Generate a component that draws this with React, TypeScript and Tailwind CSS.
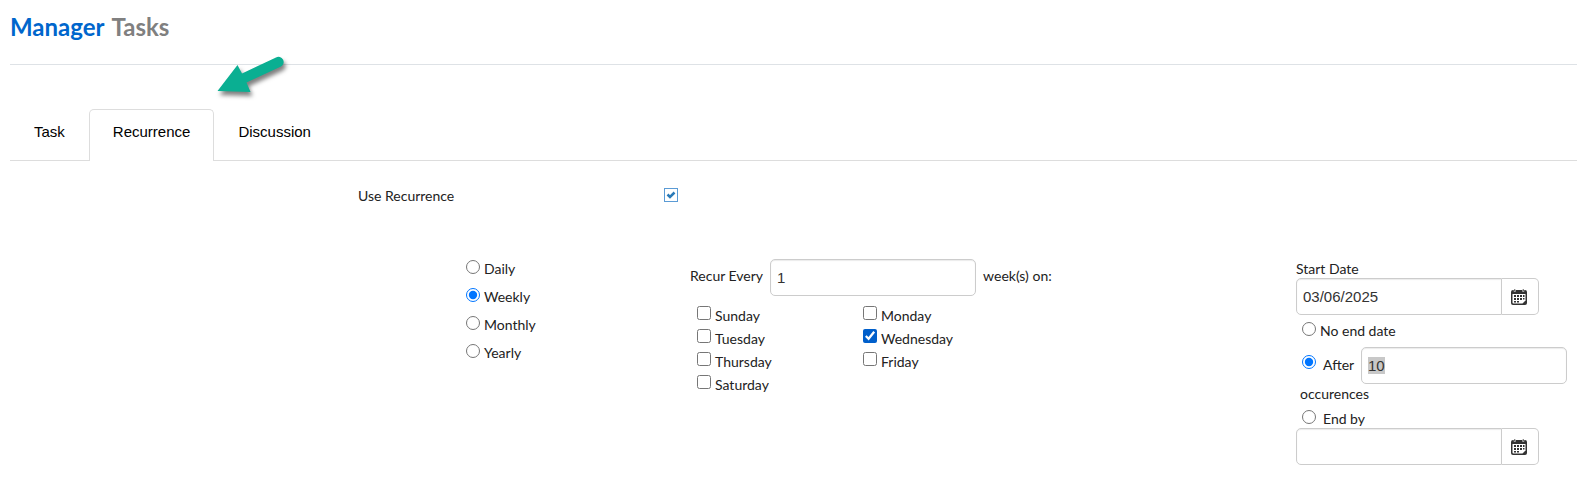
import React, { useEffect, useRef } from 'react';

const tabs = ['Task', 'Recurrence', 'Discussion'];
const periods = ['Daily', 'Weekly', 'Monthly', 'Yearly'];
const days = ['Sunday', 'Monday', 'Tuesday', 'Wednesday', 'Thursday', 'Friday', 'Saturday'];

const fieldClass =
  'h-[37px] w-[206px] border border-[#cccccc] bg-white px-[6px] font-["Liberation_Sans",sans-serif] text-[15px] text-[#333333] shadow-[inset_0_1px_1px_rgba(0,0,0,0.08)] outline-none';

const CalendarIcon: React.FC = () => (
  <svg className="mr-[2px]" width="16" height="16" viewBox="0 0 16 16" fill="none" aria-hidden="true">
    <path d="M2 1h12a2 2 0 0 1 2 2v11a2 2 0 0 1-2 2H2a2 2 0 0 1-2-2V3a2 2 0 0 1 2-2z" fill="#333333" />
    <path d="M1.500 5h13v6.500l-3 3H2.500a1 1 0 0 1-1-1z" fill="#ffffff" />
    <path d="M3 0h1.500v2.500H3zM11.500 0H13v2.500h-1.500z" fill="#333333" stroke="#ffffff" strokeWidth="0.500" />
    <path
      d="M6 6h2v2H6zM9 6h2v2H9zM12 6h1.500v2H12zM3 6h2v2H3zM3 9h2v2H3zM6 9h2v2H6zM9 9h2v2H9zM12 9h1.500v1.500H12zM3 12h2v1.500H3zM6 12h2v1.500H6z"
      fill="#333333"
    />
  </svg>
);

const Arrow: React.FC = () => (
  <svg
    className="pointer-events-none absolute top-[50px] left-[210px]"
    width="84"
    height="56"
    viewBox="210 50 84 56"
    aria-hidden="true"
  >
    <g style={{ filter: 'drop-shadow(2px 4px 2px rgba(0,0,0,0.5))' }}>
      <path
        d="M217.500 91L237.500 65L242 73.500L276 57.500A5 5 0 0 1 281 66.500L246.500 82.500L250.500 92Z"
        fill="#0aaf92"
      />
    </g>
  </svg>
);

const DateField: React.FC<{ id: string; value: string; label: string }> = ({ id, value, label }) => (
  <div className="flex">
    <input id={id} type="text" defaultValue={value} aria-label={label} className={`${fieldClass} rounded-l-[5px]`} />
    <button
      type="button"
      aria-label="Open calendar"
      className="flex h-[37px] w-[37px] items-center justify-center rounded-r-[5px] border border-l-0 border-[#cccccc] bg-white"
    >
      <CalendarIcon />
    </button>
  </div>
);

const App: React.FC = () => {
  const afterRef = useRef<HTMLInputElement>(null);

  useEffect(() => {
    afterRef.current?.select();
  }, []);

  return (
    <main className="relative bg-white pb-4 pl-[10px] font-[Lato,sans-serif] text-[14px] leading-[18px] text-[#222222]">
      <h1 className="flex h-[65px] items-start gap-[7px] border-b border-[#dee2e6] pt-[11px] text-[24px] leading-[32px] font-bold text-[#808080]">
        <span className="text-[#0066cc]">Manager</span>
        <span>Tasks</span>
      </h1>
      <Arrow />

      <div role="tablist" className="mt-11 flex border-b border-[#dddddd] font-['Liberation_Sans',sans-serif] text-[15px] text-black">
        {tabs.map((tab) => (
          <button
            key={tab}
            type="button"
            role="tab"
            aria-selected={tab === 'Recurrence'}
            className={
              tab === 'Recurrence'
                ? '-mb-px h-[52px] rounded-t-[5px] border border-b-0 border-[#dddddd] bg-white px-[23px] pb-2'
                : 'h-[51px] px-6 pb-[6px]'
            }
          >
            {tab}
          </button>
        ))}
      </div>

      <div className="mt-[27px] grid grid-cols-[348fr_306fr_913fr]">
        <label htmlFor="use-recurrence" className="col-start-2 -mt-px">
          Use Recurrence
        </label>
        <div className="relative h-[14px] w-[14px]">
          <input
            id="use-recurrence"
            type="checkbox"
            defaultChecked
            className="peer block h-[14px] w-[14px] appearance-none border border-[#5b9bd5] bg-white"
          />
          <svg
            className="pointer-events-none absolute inset-0 hidden peer-checked:block"
            width="14"
            height="14"
            viewBox="0 0 14 14"
            fill="none"
            stroke="#2a7ab8"
            strokeWidth="2.500"
            aria-hidden="true"
          >
            <path d="M3.500 6.500L6 9L10.500 4.500" />
          </svg>
        </div>
      </div>

      <div className="mt-[55px] grid grid-cols-[456fr_224fr_606fr_281fr]">
        <fieldset className="col-start-2">
          {periods.map((period) => (
            <div key={period} className="flex h-7 items-start gap-1">
              <input
                id={period}
                type="radio"
                name="period"
                defaultChecked={period === 'Weekly'}
                className="h-[14px] w-[14px] accent-[#0075ff]"
              />
              <label htmlFor={period}>{period}</label>
            </div>
          ))}
        </fieldset>

        <div className="-mt-px">
          <div className="flex items-center gap-[7px]">
            <label htmlFor="interval" className="pb-1">
              Recur Every
            </label>
            <input id="interval" type="text" defaultValue="1" className={`${fieldClass} rounded-[5px]`} />
            <span className="pb-1">week(s) on:</span>
          </div>
          <fieldset className="mt-[10px] grid grid-cols-[166px_166px] pl-[7px]">
            {days.map((day) => (
              <div key={day} className="flex h-[23px] items-start gap-1">
                <input
                  id={day}
                  type="checkbox"
                  defaultChecked={day === 'Wednesday'}
                  className="h-[14px] w-[14px] accent-[#005fcb]"
                />
                <label htmlFor={day} className="pt-px">
                  {day}
                </label>
              </div>
            ))}
          </fieldset>
        </div>

        <div>
          <label htmlFor="start-date" className="block">
            Start Date
          </label>
          <DateField id="start-date" value="03/06/2025" label="Start Date" />
          <div className="mt-[7px] flex items-start gap-1 pl-[6px]">
            <input id="no-end" type="radio" name="end" className="h-[14px] w-[14px]" />
            <label htmlFor="no-end">No end date</label>
          </div>
          <div className="mt-[7px] flex items-center pl-[6px]">
            <input id="after" type="radio" name="end" defaultChecked className="mr-[7px] mb-2 h-[14px] w-[14px] accent-[#0075ff]" />
            <label htmlFor="after" className="w-[38px] pb-[2px]">
              After
            </label>
            <input
              ref={afterRef}
              type="text"
              defaultValue="10"
              aria-label="Number of occurences"
              className={`${fieldClass} rounded-[5px] selection:bg-[#c8c8c8] selection:text-[#333333]`}
            />
          </div>
          <p className="mt-px pl-1">occurences</p>
          <div className="mt-[7px] flex items-start gap-[7px] pl-[6px]">
            <input id="end-by" type="radio" name="end" className="h-[14px] w-[14px]" />
            <label htmlFor="end-by">End by</label>
          </div>
          <DateField id="end-date" value="" label="End date" />
        </div>
      </div>
    </main>
  );
};

export default App;
